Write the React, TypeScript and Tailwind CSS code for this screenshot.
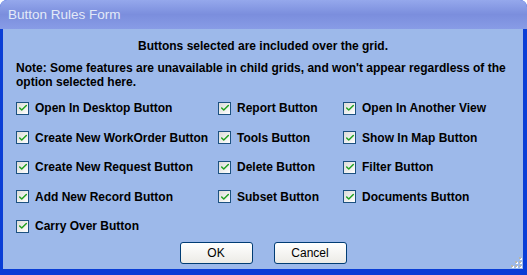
import { Check } from 'lucide-react'

const rows: string[][] = [
  ['Open In Desktop Button', 'Report Button', 'Open In Another View'],
  ['Create New WorkOrder Button', 'Tools Button', 'Show In Map Button'],
  ['Create New Request Button', 'Delete Button', 'Filter Button'],
  ['Add New Record Button', 'Subset Button', 'Documents Button'],
  ['Carry Over Button'],
]

function CheckItem({ label, className }: { label: string; className?: string }) {
  return (
    <label className={'flex h-[14px] items-center gap-[6px] ' + (className ?? '')}>
      <span className="flex h-[13px] w-[13px] shrink-0 items-center justify-center border border-[#1c5180] bg-gradient-to-br from-[#dcdcd7] to-white">
        <Check size={10} strokeWidth={3.5} className="text-[#21a121]" />
      </span>
      <span className="whitespace-nowrap">{label}</span>
    </label>
  )
}

function XpButton({ children }: { children: React.ReactNode }) {
  return (
    <button className="h-[22px] w-[73px] rounded-[3px] border border-[#003c74] bg-gradient-to-b from-white to-[#ecebe6] text-[12px] font-normal text-black">
      {children}
    </button>
  )
}

export default function App() {
  return (
    <div className="flex h-[275px] w-[527px] flex-col overflow-hidden rounded-t-[7px] bg-[#0a3ed6] font-['Liberation_Sans',Arial,sans-serif]">
      <div className="flex h-[29px] items-center bg-gradient-to-b from-[#95a8ec] via-[#7b8edd] to-[#889ce6] px-[8px] pt-[1px] text-[13.5px] text-[#e3eaf8]">
        Button Rules Form
      </div>
      <div className="relative mx-[3px] mb-[6px] mr-[4px] flex flex-1 flex-col bg-[#9db9ea] px-[13px] text-[12px] font-bold text-black">
        <div className="mt-[10px] text-center leading-[14px]">Buttons selected are included over the grid.</div>
        <div className="mt-[8px] leading-[14px]">
          Note: Some features are unavailable in child grids, and won't appear regardless of the option selected here.
        </div>
        <div className="mt-[12px] flex flex-col gap-[15.5px]">
          {rows.map((r, i) => (
            <div key={i} className="flex">
              <CheckItem label={r[0]} className="w-[202px]" />
              {r[1] && <CheckItem label={r[1]} className="w-[125px]" />}
              {r[2] && <CheckItem label={r[2]} />}
            </div>
          ))}
        </div>
        <div className="mt-[9px] flex justify-center gap-[21px]">
          <XpButton>OK</XpButton>
          <XpButton>Cancel</XpButton>
        </div>
        <svg className="absolute bottom-[1px] right-[1px]" width="12" height="12" viewBox="0 0 12 12">
          {[
            [9, 1], [9, 5], [5, 5], [9, 9], [5, 9], [1, 9],
          ].map(([x, y], i) => (
            <g key={i}>
              <rect x={x + 1} y={y + 1} width="2" height="2" fill="#fff" />
              <rect x={x} y={y} width="2" height="2" fill="#b7b6ad" />
            </g>
          ))}
        </svg>
      </div>
    </div>
  )
}
